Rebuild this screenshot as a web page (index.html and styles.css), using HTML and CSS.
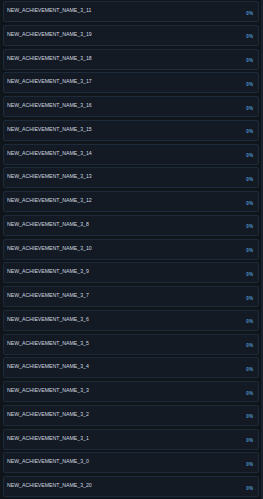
FILE: index.html
```html
<!DOCTYPE html>
<html lang="en">
<head>
    <meta charset="UTF-8">
    <title>Achievements</title>
    <link rel="stylesheet" href="styles.css">
</head>
<body>
    <div class="list">
        <div class="ach"><span class="name">NEW_ACHIEVEMENT_NAME_3_11</span><span class="pct">0%</span></div>
        <div class="ach"><span class="name">NEW_ACHIEVEMENT_NAME_3_19</span><span class="pct">0%</span></div>
        <div class="ach"><span class="name">NEW_ACHIEVEMENT_NAME_3_18</span><span class="pct">0%</span></div>
        <div class="ach"><span class="name">NEW_ACHIEVEMENT_NAME_3_17</span><span class="pct">0%</span></div>
        <div class="ach"><span class="name">NEW_ACHIEVEMENT_NAME_3_16</span><span class="pct">0%</span></div>
        <div class="ach"><span class="name">NEW_ACHIEVEMENT_NAME_3_15</span><span class="pct">0%</span></div>
        <div class="ach"><span class="name">NEW_ACHIEVEMENT_NAME_3_14</span><span class="pct">0%</span></div>
        <div class="ach"><span class="name">NEW_ACHIEVEMENT_NAME_3_13</span><span class="pct">0%</span></div>
        <div class="ach"><span class="name">NEW_ACHIEVEMENT_NAME_3_12</span><span class="pct">0%</span></div>
        <div class="ach"><span class="name">NEW_ACHIEVEMENT_NAME_3_8</span><span class="pct">0%</span></div>
        <div class="ach"><span class="name">NEW_ACHIEVEMENT_NAME_3_10</span><span class="pct">0%</span></div>
        <div class="ach"><span class="name">NEW_ACHIEVEMENT_NAME_3_9</span><span class="pct">0%</span></div>
        <div class="ach"><span class="name">NEW_ACHIEVEMENT_NAME_3_7</span><span class="pct">0%</span></div>
        <div class="ach"><span class="name">NEW_ACHIEVEMENT_NAME_3_6</span><span class="pct">0%</span></div>
        <div class="ach"><span class="name">NEW_ACHIEVEMENT_NAME_3_5</span><span class="pct">0%</span></div>
        <div class="ach"><span class="name">NEW_ACHIEVEMENT_NAME_3_4</span><span class="pct">0%</span></div>
        <div class="ach"><span class="name">NEW_ACHIEVEMENT_NAME_3_3</span><span class="pct">0%</span></div>
        <div class="ach"><span class="name">NEW_ACHIEVEMENT_NAME_3_2</span><span class="pct">0%</span></div>
        <div class="ach"><span class="name">NEW_ACHIEVEMENT_NAME_3_1</span><span class="pct">0%</span></div>
        <div class="ach"><span class="name">NEW_ACHIEVEMENT_NAME_3_0</span><span class="pct">0%</span></div>
        <div class="ach"><span class="name">NEW_ACHIEVEMENT_NAME_3_20</span><span class="pct">0%</span></div>
    </div>
</body>
</html>
```

FILE: styles.css
```css
* {
    margin: 0;
    padding: 0;
    box-sizing: border-box;
    font-family: "Liberation Sans", Arial, sans-serif;
}

html, body {
    height: 100%;
    overflow: hidden;
}

body {
    background-color: #10151c;
    border-right: 2px solid #1a2230;
}

.list {
    display: flex;
    flex-direction: column;
    gap: 2.75px;
    padding: 1px 2px 0 3px;
}

.ach {
    height: 21px;
    display: flex;
    justify-content: space-between;
    background-color: #131a23;
    border: 1px solid #1c2a39;
    border-radius: 2px;
    padding: 0 5px 0 3px;
}

.name {
    color: #d2d9e0;
    font-size: 5.2px;
    line-height: 1;
    margin-top: 6px;
}

.pct {
    color: #5298d2;
    font-size: 4.6px;
    font-weight: bold;
    line-height: 1;
    margin-top: 9.5px;
}
```
